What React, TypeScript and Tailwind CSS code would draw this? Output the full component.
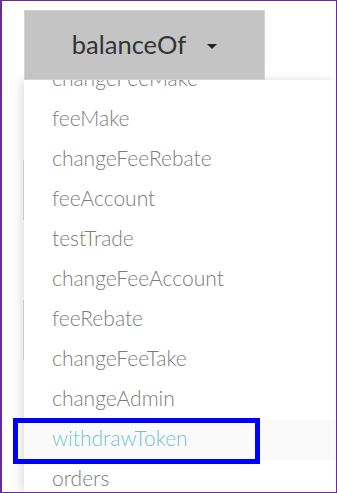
import React from "react";

const items = [
  "changeFeeMake",
  "feeMake",
  "changeFeeRebate",
  "feeAccount",
  "testTrade",
  "changeFeeAccount",
  "feeRebate",
  "changeFeeTake",
  "changeAdmin",
  "withdrawToken",
  "orders",
];

export default function App() {
  return (
    <div
      className="relative w-[337px] h-[493px] overflow-hidden bg-white border-t border-r border-b border-l-2 border-[#6a2a9c]"
      style={{ fontFamily: "Lato, 'Open Sans', sans-serif" }}
    >
      {/* faint green marks behind menu */}
      <div className="absolute left-[21px] top-[159px] w-[2px] h-[60px] bg-[#d3e8d3]" />
      <div className="absolute left-[21px] top-[299px] w-[2px] h-[60px] bg-[#d3e8d3]" />

      <div className="flex flex-col pt-[9px] pl-[22px] h-full">
        <div className="relative z-10 w-[241px] h-[70px] shrink-0 bg-[#c4c4c4] border border-[#d2d2d2] flex items-center justify-center gap-[21px]">
          <span className="text-[25.5px] text-[#333] leading-none">balanceOf</span>
          <span className="w-0 h-0 border-l-[5px] border-r-[5px] border-t-[5px] border-l-transparent border-r-transparent border-t-[#222] mt-[2px]" />
        </div>
        <div className="relative flex-1 overflow-hidden bg-white shadow-[-3px_0_9px_rgba(0,0,0,0.13)]">
          <div className="-mt-[20px] flex flex-col">
            {items.map((it) => {
              const active = it === "withdrawToken";
              return (
                <div
                  key={it}
                  className={
                    active
                      ? "h-[40px] shrink-0 flex items-center pl-[28px] pb-[4px] text-[21px] font-light text-[#72c4dc] bg-[#fafafa]"
                      : "h-[40px] shrink-0 flex items-center pl-[28px] pb-[4px] text-[21px] font-light text-[#7c7c7c]"
                  }
                >
                  {it}
                </div>
              );
            })}
          </div>
        </div>
      </div>

      {/* annotation box */}
      <div className="absolute left-[11px] top-[417px] w-[247px] h-[46px] border-[5px] border-[#0000ff]" />
    </div>
  );
}
